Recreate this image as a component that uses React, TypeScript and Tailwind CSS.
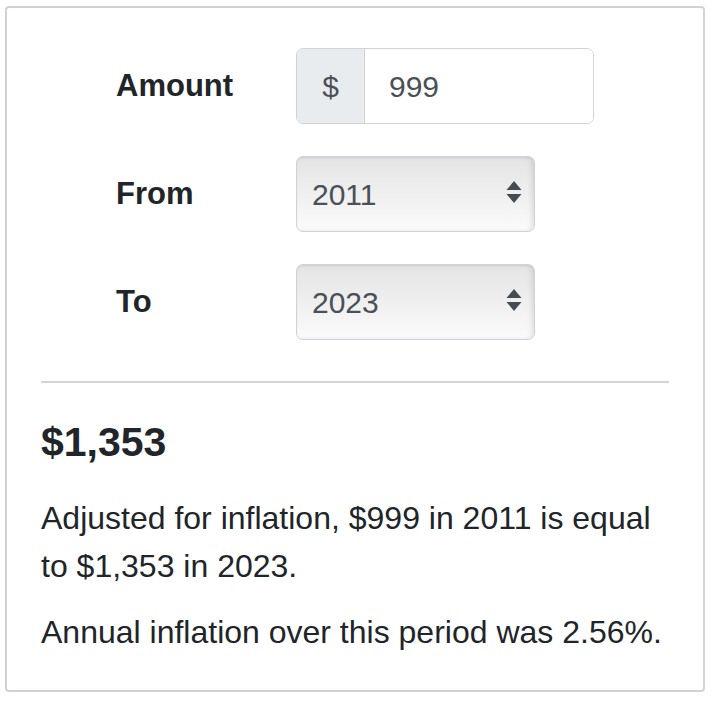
import { useState } from "react";

const years = ["2011", "2012", "2013", "2014", "2015", "2016", "2017", "2018", "2019", "2020", "2021", "2022", "2023"];

function YearSelect({ value, onChange }: { value: string; onChange: (v: string) => void }) {
  return (
    <div className="relative w-[239px] h-[76px]">
      <select
        value={value}
        onChange={(e) => onChange(e.target.value)}
        className="appearance-none w-full h-full rounded-[7px] border border-[#cfd3d7] bg-gradient-to-b from-[#e4e4e4] via-[#efefef] to-[#fbfbfb] pl-[15px] text-[30px] text-[#495057] shadow-[inset_-3px_0_4px_rgba(0,0,0,0.08),inset_0_1px_2px_rgba(0,0,0,0.06)] outline-none"
      >
        {years.map((y) => (
          <option key={y} value={y}>
            {y}
          </option>
        ))}
      </select>
      <svg
        className="pointer-events-none absolute right-[13px] top-[24px]"
        width="16"
        height="28"
        viewBox="0 0 16 28"
      >
        <path d="M8 1 L15.5 10 L0.5 10 Z" fill="#444b52" />
        <path d="M0.5 14 L15.5 14 L8 23 Z" fill="#444b52" />
      </svg>
    </div>
  );
}

export default function App() {
  const [amount, setAmount] = useState("999");
  const [from, setFrom] = useState("2011");
  const [to, setTo] = useState("2023");

  return (
    <div className="min-h-screen bg-white pt-[6px] pl-[5px] pr-[7px] font-['Liberation_Sans',Arial,sans-serif] text-[#212529]">
      <div className="rounded-[4px] border-2 border-[#d2d2d2] px-[34px] pt-[40px] pb-[34px]">
        {/* form */}
        <div className="flex flex-col gap-[32px] pl-[75px]">
          <div className="flex items-center">
            <label className="w-[180px] text-[31px] font-bold">Amount</label>
            <div className="flex h-[76px] w-[298px] rounded-[7px] border border-[#cfd3d7] overflow-hidden">
              <span className="flex w-[68px] items-center justify-center border-r border-[#cfd3d7] bg-[#e9ecef] text-[30px] text-[#495057]">
                $
              </span>
              <input
                value={amount}
                onChange={(e) => setAmount(e.target.value)}
                className="min-w-0 flex-1 bg-white pl-[24px] text-[30px] text-[#495057] outline-none"
              />
            </div>
          </div>
          <div className="flex items-center">
            <label className="w-[180px] text-[31px] font-bold">From</label>
            <YearSelect value={from} onChange={setFrom} />
          </div>
          <div className="flex items-center">
            <label className="w-[180px] text-[31px] font-bold">To</label>
            <YearSelect value={to} onChange={setTo} />
          </div>
        </div>

        <hr className="mt-[41px] border-t-2 border-[#d4d4d4]" />

        {/* result */}
        <h2 className="mt-[35px] text-[41px] font-bold leading-[48px]">$1,353</h2>
        <p className="mt-[28px] text-[32px] leading-[48px]">
          Adjusted for inflation, $999 in 2011 is equal to $1,353 in 2023.
        </p>
        <p className="mt-[18px] text-[32px] leading-[48px]">Annual inflation over this period was 2.56%.</p>
      </div>
    </div>
  );
}
